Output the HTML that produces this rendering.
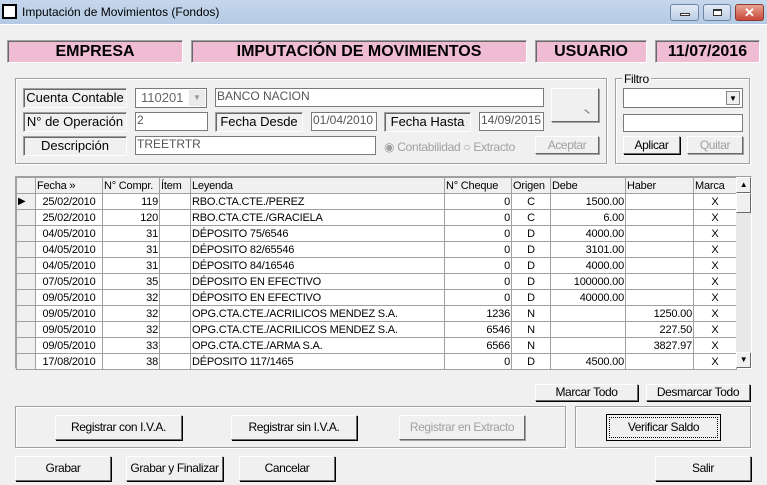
<!DOCTYPE html>
<html><head><meta charset="utf-8"><style>
*{box-sizing:border-box;margin:0;padding:0}
body{width:767px;height:485px;background:#f0f0f0;font-family:"Liberation Sans",sans-serif;position:relative;overflow:hidden;color:#000}
.a{position:absolute}
.title{left:0;top:0;width:767px;height:24px;background:linear-gradient(#c5d7ec,#b4cae4);}
.hdr{background:#f0bcd4;border:1px solid #a0a0a0;border-right-color:#fff;border-bottom-color:#fff;box-shadow:inset 1px 1px 0 #696969;font-weight:bold;font-size:16px;text-align:center;line-height:21px}
.grp{border:1px solid #a0a0a0;box-shadow:1px 1px 0 #fff, inset 1px 1px 0 #fff}
.lbl{border:1px solid #a0a0a0;border-right-color:#fff;border-bottom-color:#fff;box-shadow:inset 1px 1px 0 #696969;font-size:13px;text-align:center;line-height:18px;background:#f0f0f0;white-space:nowrap;overflow:hidden}
.inp{background:#fff;border:1px solid #7a7a7a;font-size:12px;color:#555;padding-left:1px;line-height:14px}
.btn{background:#f0f0f0;border:1px solid #fff;border-right-color:#696969;border-bottom-color:#696969;box-shadow:1px 1px 0 #000;font-size:12px;text-align:center;letter-spacing:-0.4px;white-space:nowrap}
.dis{color:#a0a0a0}
table{border-collapse:collapse;table-layout:fixed;font-size:11px;letter-spacing:-0.2px}
td{border:1px solid #a0a0a0;height:16px;padding:0 1px;white-space:nowrap;overflow:hidden;background:#fff}
td.r{text-align:right}td.c{text-align:center}
tr.h td{background:#f0f0f0;height:16px}
td.ind{background:#f0f0f0}
</style></head><body>
<div class="a title"></div>
<div class="a" style="left:2px;top:4px;width:15px;height:15px;border:2px solid #000;background:#fff"></div>
<div class="a" style="left:22px;top:5px;font-size:12px">Imputación de Movimientos (Fondos)</div>
<div class="a" style="left:670px;top:4px;width:29px;height:17px;border:1px solid #6d84a3;border-radius:3px;background:linear-gradient(#e3ecf6,#bccde3)"><div class="a" style="left:9px;top:8px;width:10px;height:3px;border:1px solid #333;background:#fff"></div></div>
<div class="a" style="left:703px;top:4px;width:28px;height:17px;border:1px solid #6d84a3;border-radius:3px;background:linear-gradient(#e3ecf6,#bccde3)"><div class="a" style="left:9px;top:4px;width:9px;height:7px;border:1px solid #333;border-top-width:2px;background:#fff"></div></div>
<div class="a" style="left:735px;top:4px;width:29px;height:17px;border:1px solid #8a3a2f;border-radius:3px;background:linear-gradient(#e8a393,#c7483a);color:#fff;font-weight:bold;font-size:13px;text-align:center;line-height:15px">✕</div>
<div class="a" style="left:0;top:24px;width:767px;height:1px;background:#fff"></div>

<div class="a hdr" style="left:7px;top:40px;width:176px;height:23px">EMPRESA</div>
<div class="a hdr" style="left:191px;top:40px;width:336px;height:23px">IMPUTACIÓN DE MOVIMIENTOS</div>
<div class="a hdr" style="left:535px;top:40px;width:112px;height:23px">USUARIO</div>
<div class="a hdr" style="left:655px;top:40px;width:105px;height:23px">11/07/2016</div>

<div class="a grp" style="left:15px;top:78px;width:592px;height:86px"></div>
<div class="a grp" style="left:615px;top:78px;width:135px;height:86px"></div>
<div class="a" style="left:622px;top:72px;background:#f0f0f0;font-size:12px;padding:0 2px;letter-spacing:-0.3px">Filtro</div>

<div class="a lbl" style="left:23px;top:88px;width:104px;height:20px">Cuenta Contable</div>
<div class="a inp" style="left:135px;top:88px;width:72px;height:20px;font-size:13px;padding-left:5px;line-height:18px;color:#666">110201</div>
<div class="a" style="left:189px;top:90px;width:16px;height:16px;background:#eaeaea;color:#999;font-size:8px;text-align:center;line-height:16px">▼</div>
<div class="a inp" style="left:215px;top:88px;width:329px;height:19px">BANCO NACION</div>
<div class="a btn" style="left:551px;top:88px;width:48px;height:34px;box-shadow:1px 1px 0 #a0a0a0"><div class="a" style="left:32px;top:22px;width:6px;height:1px;background:#666;transform:rotate(40deg)"></div></div>

<div class="a lbl" style="left:23px;top:112px;width:104px;height:20px">N° de Operación</div>
<div class="a inp" style="left:135px;top:112px;width:73px;height:19px">2</div>
<div class="a lbl" style="left:215px;top:112px;width:88px;height:20px">Fecha Desde</div>
<div class="a inp" style="left:311px;top:112px;width:66px;height:19px">01/04/2010</div>
<div class="a lbl" style="left:384px;top:112px;width:87px;height:20px">Fecha Hasta</div>
<div class="a inp" style="left:479px;top:112px;width:65px;height:19px">14/09/2015</div>

<div class="a lbl" style="left:23px;top:136px;width:104px;height:20px">Descripción</div>
<div class="a inp" style="left:135px;top:136px;width:241px;height:19px">TREETRTR</div>
<div class="a dis" style="left:384px;top:140px;font-size:12px;letter-spacing:-0.3px">◉ Contabilidad ○ Extracto</div>
<div class="a btn dis" style="left:535px;top:136px;width:64px;height:18px;line-height:16px;box-shadow:1px 1px 0 #a0a0a0">Aceptar</div>

<div class="a inp" style="left:623px;top:88px;width:120px;height:20px"></div>
<div class="a" style="left:726px;top:91px;width:14px;height:14px;background:#f0f0f0;border:1px solid #888;font-size:8px;text-align:center;line-height:13px">▼</div>
<div class="a inp" style="left:623px;top:114px;width:120px;height:18px"></div>
<div class="a btn" style="left:623px;top:136px;width:57px;height:18px;line-height:16px">Aplicar</div>
<div class="a btn dis" style="left:687px;top:136px;width:56px;height:18px;line-height:16px;box-shadow:1px 1px 0 #a0a0a0">Quitar</div>

<div class="a" style="left:15px;top:176px;width:737px;height:193px;background:#f0f0f0;border:1px solid #a0a0a0;border-right-color:#fff;border-bottom-color:#fff;box-shadow:inset 1px 1px 0 #696969"></div>
<table class="a" style="left:16px;top:177px;width:720px">
<colgroup><col style="width:19px"><col style="width:67px"><col style="width:57px"><col style="width:31px"><col style="width:254px"><col style="width:67px"><col style="width:39px"><col style="width:75px"><col style="width:68px"><col style="width:43px"></colgroup>
<tr class="h"><td></td><td>Fecha »</td><td>N° Compr.</td><td>Ítem</td><td>Leyenda</td><td>N° Cheque</td><td>Origen</td><td>Debe</td><td>Haber</td><td>Marca</td></tr>
<tr><td class="ind" style="font-size:10px">▶</td><td class="c">25/02/2010</td><td class="r">119</td><td></td><td>RBO.CTA.CTE./PEREZ</td><td class="r">0</td><td class="c">C</td><td class="r">1500.00</td><td></td><td class="c">X</td></tr>
<tr><td class="ind"></td><td class="c">25/02/2010</td><td class="r">120</td><td></td><td>RBO.CTA.CTE./GRACIELA</td><td class="r">0</td><td class="c">C</td><td class="r">6.00</td><td></td><td class="c">X</td></tr>
<tr><td class="ind"></td><td class="c">04/05/2010</td><td class="r">31</td><td></td><td>DÉPOSITO 75/6546</td><td class="r">0</td><td class="c">D</td><td class="r">4000.00</td><td></td><td class="c">X</td></tr>
<tr><td class="ind"></td><td class="c">04/05/2010</td><td class="r">31</td><td></td><td>DÉPOSITO 82/65546</td><td class="r">0</td><td class="c">D</td><td class="r">3101.00</td><td></td><td class="c">X</td></tr>
<tr><td class="ind"></td><td class="c">04/05/2010</td><td class="r">31</td><td></td><td>DÉPOSITO 84/16546</td><td class="r">0</td><td class="c">D</td><td class="r">4000.00</td><td></td><td class="c">X</td></tr>
<tr><td class="ind"></td><td class="c">07/05/2010</td><td class="r">35</td><td></td><td>DÉPOSITO EN EFECTIVO</td><td class="r">0</td><td class="c">D</td><td class="r">100000.00</td><td></td><td class="c">X</td></tr>
<tr><td class="ind"></td><td class="c">09/05/2010</td><td class="r">32</td><td></td><td>DÉPOSITO EN EFECTIVO</td><td class="r">0</td><td class="c">D</td><td class="r">40000.00</td><td></td><td class="c">X</td></tr>
<tr><td class="ind"></td><td class="c">09/05/2010</td><td class="r">32</td><td></td><td>OPG.CTA.CTE./ACRILICOS MENDEZ S.A.</td><td class="r">1236</td><td class="c">N</td><td></td><td class="r">1250.00</td><td class="c">X</td></tr>
<tr><td class="ind"></td><td class="c">09/05/2010</td><td class="r">32</td><td></td><td>OPG.CTA.CTE./ACRILICOS MENDEZ S.A.</td><td class="r">6546</td><td class="c">N</td><td></td><td class="r">227.50</td><td class="c">X</td></tr>
<tr><td class="ind"></td><td class="c">09/05/2010</td><td class="r">33</td><td></td><td>OPG.CTA.CTE./ARMA S.A.</td><td class="r">6566</td><td class="c">N</td><td></td><td class="r">3827.97</td><td class="c">X</td></tr>
<tr><td class="ind"></td><td class="c">17/08/2010</td><td class="r">38</td><td></td><td>DÉPOSITO 117/1465</td><td class="r">0</td><td class="c">D</td><td class="r">4500.00</td><td></td><td class="c">X</td></tr>
</table>
<div class="a" style="left:736px;top:177px;width:15px;height:191px;background:#e8e8e8"></div>
<div class="a btn" style="left:736px;top:177px;width:15px;height:16px;font-size:8px;line-height:14px;box-shadow:none">▲</div>
<div class="a btn" style="left:736px;top:193px;width:15px;height:20px;box-shadow:none"></div>
<div class="a btn" style="left:736px;top:352px;width:15px;height:16px;font-size:8px;line-height:14px;box-shadow:none">▼</div>

<div class="a btn" style="left:535px;top:384px;width:103px;height:17px;line-height:15px">Marcar Todo</div>
<div class="a btn" style="left:646px;top:384px;width:104px;height:17px;line-height:15px">Desmarcar Todo</div>

<div class="a grp" style="left:15px;top:406px;width:551px;height:42px"></div>
<div class="a grp" style="left:575px;top:406px;width:176px;height:42px"></div>
<div class="a btn" style="left:55px;top:415px;width:127px;height:25px;line-height:23px">Registrar con I.V.A.</div>
<div class="a btn" style="left:231px;top:415px;width:126px;height:25px;line-height:23px">Registrar sin I.V.A.</div>
<div class="a btn dis" style="left:399px;top:415px;width:126px;height:25px;line-height:23px;box-shadow:1px 1px 0 #a0a0a0">Registrar en Extracto</div>
<div class="a btn" style="left:606px;top:414px;width:115px;height:27px;border:1px solid #000;box-shadow:none;padding:2px"><div style="border:1px dotted #000;height:21px;line-height:19px">Verificar Saldo</div></div>

<div class="a btn" style="left:15px;top:456px;width:96px;height:25px;line-height:23px">Grabar</div>
<div class="a btn" style="left:126px;top:456px;width:97px;height:25px;line-height:23px">Grabar y Finalizar</div>
<div class="a btn" style="left:239px;top:456px;width:96px;height:25px;line-height:23px">Cancelar</div>
<div class="a btn" style="left:655px;top:456px;width:96px;height:25px;line-height:23px">Salir</div>
</body></html>
